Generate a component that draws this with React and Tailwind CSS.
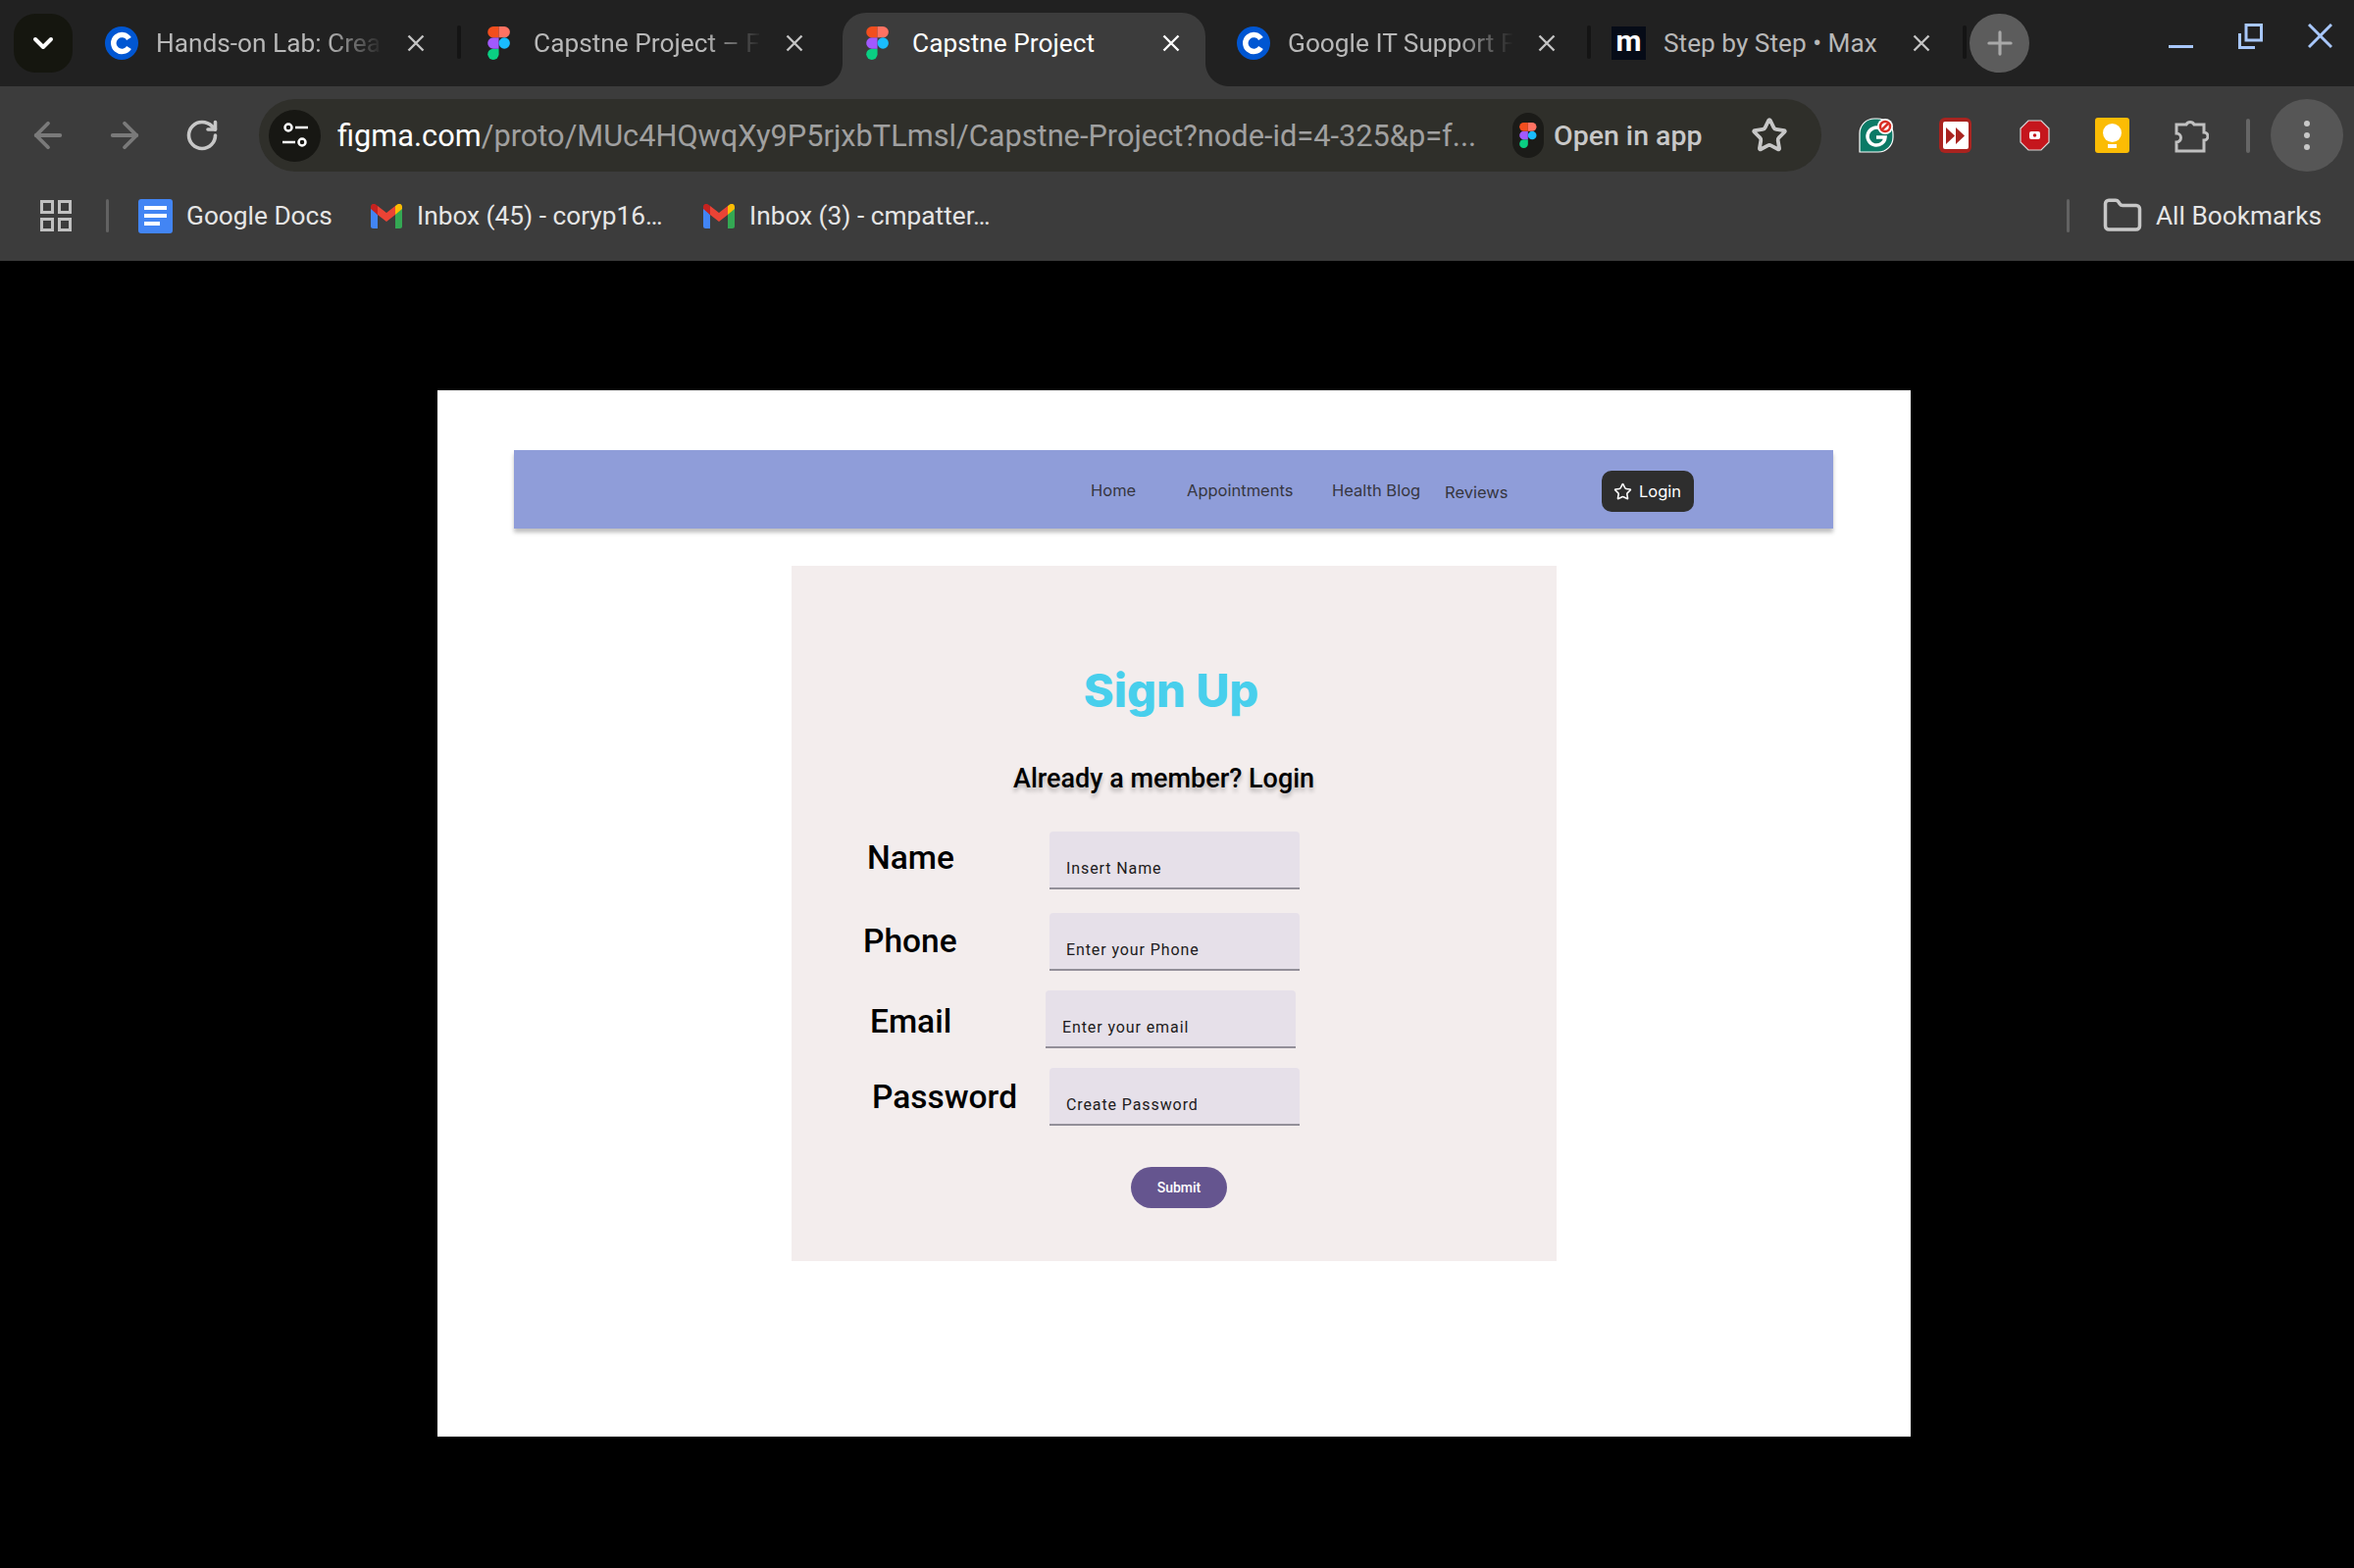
import { ArrowLeft, ArrowRight, RotateCw, Star, Plus, Folder, ChevronDown } from 'lucide-react'

const fade = '[mask-image:linear-gradient(to_right,black_75%,transparent)]'

function CloseIcon({ className = '' }) {
  return (
    <svg width="18" height="18" viewBox="0 0 18 18" className={`shrink-0 ${className}`} fill="none" stroke="currentColor" strokeWidth="2.4">
      <path d="M1.5 1.5 16.5 16.5M16.5 1.5 1.5 16.5" />
    </svg>
  )
}

function CourseraIcon() {
  return (
    <svg width="34" height="34" viewBox="0 0 34 34" className="shrink-0">
      <circle cx="17" cy="17" r="17" fill="#0056d2" />
      <path d="M24.500 12.500a8.500 8.500 0 1 0 0 9" fill="none" stroke="#fff" strokeWidth="5.500" />
    </svg>
  )
}

function FigmaIcon({ size = 34 }) {
  return (
    <svg width={size * 0.68} height={size} viewBox="0 0 24 36" className="shrink-0">
      <path d="M6 36a6 6 0 0 0 6-6v-6H6a6 6 0 0 0 0 12z" fill="#0acf83" />
      <path d="M0 18a6 6 0 0 1 6-6h6v12H6a6 6 0 0 1-6-6z" fill="#a259ff" />
      <path d="M0 6a6 6 0 0 1 6-6h6v12H6a6 6 0 0 1-6-6z" fill="#f24e1e" />
      <path d="M12 0h6a6 6 0 0 1 0 12h-6z" fill="#ff7262" />
      <circle cx="18" cy="18" r="6" fill="#1abcfe" />
    </svg>
  )
}

function GmailIcon() {
  return (
    <svg width="32" height="25" viewBox="0 0 32 25" className="shrink-0">
      <path d="M0 3v19.500A2.500 2.500 0 0 0 2.500 25H7V11z" fill="#4285f4" />
      <path d="M25 11v14h4.500a2.500 2.500 0 0 0 2.500-2.500V3z" fill="#34a853" />
      <path d="M25 2v9l7-6V3c0-3-3-4-5-2.500z" fill="#fbbc04" />
      <path d="M7 11V2l9 7 9-7v9l-9 7z" fill="#ea4335" />
      <path d="M0 3v2l7 6V2L5 .5C3-1 0 0 0 3z" fill="#c5221f" />
    </svg>
  )
}

function DocsIcon() {
  return (
    <div className="w-[35px] h-[35px] rounded-[3px] bg-[#4285f4] flex flex-col justify-center gap-[4px] px-[6px] shrink-0">
      <div className="h-[4px] bg-white" />
      <div className="h-[4px] bg-white" />
      <div className="h-[4px] w-[16px] bg-white" />
    </div>
  )
}

function Tab({ className, titleClass, closeClass, icon, title, active }) {
  return (
    <div className={`relative flex items-center h-full shrink-0 ${className}`}>
      {icon}
      <span className={`text-[26.250px] leading-[34px] whitespace-nowrap ${active ? 'text-white' : 'text-[#b8b8b8]'} ${titleClass}`}>{title}</span>
      <CloseIcon className={`${active ? 'text-white' : 'text-[#c4c4c4]'} ${closeClass}`} />
    </div>
  )
}

function TabStrip() {
  return (
    <div className="relative h-[88px] bg-[#212121] flex items-end pl-[14px] shrink-0">
      <div className="self-start mt-[14px] w-[60px] h-[60px] rounded-[22px] bg-[#15160f] flex items-center justify-center shrink-0">
        <ChevronDown size={32} strokeWidth={3} color="#fff" />
      </div>
      <div className="flex h-[75px] ml-[18px] pb-[13px]">
        <Tab className="w-[374px] pl-[15px]" icon={<CourseraIcon />} title="Hands-on Lab: Crea" titleClass={`ml-[18px] w-[232px] ${fade}`} closeClass="ml-[24px]" />
        <div className="w-[4px] h-[34px] mt-[13px] rounded-full bg-[#141414]" />
        <Tab className="w-[389px] pl-[27px]" icon={<FigmaIcon />} title="Capstne Project – F" titleClass={`ml-[24px] w-[233px] ${fade}`} closeClass="ml-[24px]" />
        <div className="relative w-[370px] h-[75px] -mb-[13px] bg-[#3c3c3c] rounded-t-[24px] pl-[24px] shrink-0">
          <div className="absolute left-[-24px] bottom-0 w-[24px] h-[24px] bg-[radial-gradient(circle_at_0_0,#212121_23.500px,#3c3c3c_24.500px)]" />
          <div className="absolute right-[-24px] bottom-0 w-[24px] h-[24px] bg-[radial-gradient(circle_at_100%_0,#212121_23.500px,#3c3c3c_24.500px)]" />
          <div className="h-[62px]">
            <Tab active icon={<FigmaIcon />} title="Capstne Project" titleClass="ml-[24px] w-[231px]" closeClass="ml-[24px]" />
          </div>
        </div>
        <Tab className="w-[389px] pl-[32px]" icon={<CourseraIcon />} title="Google IT Support F" titleClass={`ml-[18px] w-[230px] ${fade}`} closeClass="ml-[25px]" />
        <div className="w-[4px] h-[34px] mt-[13px] rounded-full bg-[#141414]" />
        <Tab
          className="w-[379px] pl-[21px]"
          icon={
            <div className="w-[35px] h-[34px] bg-[#060b17] flex items-center justify-center shrink-0">
              <span className="text-white text-[30px] leading-none font-bold font-['Roboto',sans-serif] -mt-[4px]">m</span>
            </div>
          }
          title="Step by Step • Max"
          titleClass="ml-[18px] w-[227px]"
          closeClass="ml-[27px]"
        />
        <div className="w-[4px] h-[34px] mt-[13px] rounded-full bg-[#141414]" />
      </div>
      <div className="self-start mt-[14px] ml-[3px] w-[61px] h-[60px] rounded-full bg-[#5c5c5c] flex items-center justify-center shrink-0">
        <Plus size={38} strokeWidth={2} color="#a9a9a9" />
      </div>
      {/* window buttons */}
      <div className="self-start flex ml-[142px] mt-[24px] gap-[46px] text-[#a8c7fa] shrink-0">
        <svg width="25" height="26" viewBox="0 0 25 26" fill="none" stroke="currentColor" strokeWidth="3">
          <path d="M0 23.500H25" />
        </svg>
        <svg width="25" height="26" viewBox="0 0 25 26" fill="none" stroke="currentColor" strokeWidth="3">
          <path d="M1.500 10V24.500H17M8 1.500H23.500V17H8z" />
        </svg>
        <svg width="25" height="26" viewBox="0 0 25 26" fill="none" stroke="currentColor" strokeWidth="3">
          <path d="M1 1 24 24M24 1 1 24" />
        </svg>
      </div>
    </div>
  )
}

function Toolbar() {
  return (
    <div className="h-[100px] flex items-center shrink-0 bg-[#3c3c3c] pl-[28px]">
      <ArrowLeft size={42} strokeWidth={2.2} color="#7a7a7a" className="shrink-0" />
      <ArrowRight size={42} strokeWidth={2.2} color="#7a7a7a" className="ml-[36px] shrink-0" />
      <RotateCw size={36} strokeWidth={2.4} color="#c7c7c7" className="ml-[40px] shrink-0" />
      {/* address bar */}
      <div className="ml-[40px] w-[1593px] h-[74px] rounded-full bg-[#2f2f2a] flex items-center pl-[10px] shrink-0">
        <div className="w-[53px] h-[53px] rounded-full bg-[#171713] flex items-center justify-center shrink-0">
          <svg width="30" height="30" viewBox="0 0 30 30" fill="none" stroke="#fff" strokeWidth="2.500">
            <circle cx="8" cy="7" r="3.500" />
            <path d="M15 7H28M2 22H15" />
            <circle cx="22" cy="22" r="3.500" />
          </svg>
        </div>
        <div className="ml-[17px] w-[1198px] mt-[2px] text-[30.750px] leading-[40px] whitespace-nowrap">
          <span className="text-white">figma.com</span>
          <span className="text-[#a0a0a0]">/proto/MUc4HQwqXy9P5rjxbTLmsl/Capstne-Project?node-id=4-325&amp;p=f...</span>
        </div>
        <div className="w-[32px] h-[46px] rounded-full bg-[#1b1b18] flex items-center justify-center shrink-0">
          <FigmaIcon size={26} />
        </div>
        <span className="ml-[10px] mt-[2px] text-[28.500px] leading-[40px] font-medium text-[#c8c8c8] whitespace-nowrap">Open in app</span>
        <Star size={38} strokeWidth={2.4} color="#c7c7c7" className="ml-[50px] shrink-0" />
      </div>
      {/* extensions */}
      <svg width="36" height="36" viewBox="0 0 36 36" className="ml-[38px] shrink-0">
        <path d="M1 35V16A15 15 0 0 1 16 1H19A16 16 0 0 1 35 17V20A15 15 0 0 1 20 35z" fill="#0b7a66" stroke="#fff" strokeWidth="1.200" />
        <path d="M22 11a9 9 0 1 0 5 9H18" fill="none" stroke="#fff" strokeWidth="3.500" />
        <circle cx="27" cy="9" r="8" fill="#fff" />
        <circle cx="27" cy="9" r="5" fill="none" stroke="#d93025" strokeWidth="2.500" />
        <path d="M23.500 12.500 30.500 5.500" stroke="#d93025" strokeWidth="2.500" />
      </svg>
      <div className="ml-[46px] w-[33px] h-[36px] rounded-[6px] bg-[#a9231f] flex items-center justify-center shrink-0">
        <div className="w-[26px] h-[28px] rounded-[2px] bg-white flex items-center justify-center">
          <svg width="19" height="17" viewBox="0 0 19 17" fill="#a9231f">
            <path d="M0 0 9 8.500 0 17zM10 0 19 8.500 10 17z" />
          </svg>
        </div>
      </div>
      <svg width="31" height="32" viewBox="0 0 31 32" className="ml-[49px] shrink-0">
        <path d="M9 1H22L30 9V23L22 31H9L1 23V9z" fill="#c5161d" stroke="#d8d8d8" strokeWidth="1.200" />
        <rect x="10" y="12" width="11" height="8" rx="2" fill="#fff" />
        <circle cx="15.500" cy="16" r="1.800" fill="#c5161d" />
      </svg>
      <div className="ml-[46px] w-[35px] h-[36px] rounded-[3px] bg-[#fbbc04] flex flex-col items-center justify-center shrink-0">
        <div className="w-[19px] h-[19px] rounded-full bg-white" />
        <div className="w-[9px] h-[4px] bg-white mt-[2px]" />
      </div>
      <svg width="36" height="38" viewBox="0 0 36 38" fill="none" stroke="#c0c0c0" strokeWidth="3" className="ml-[45px] mb-[3px] shrink-0">
        <path d="M3 9H13a4.500 4.500 0 0 1 8 0H31V17a4 4 0 0 1 0 8V36H3V27a4.500 4.500 0 0 0 0-9z" />
      </svg>
      <div className="ml-[38px] w-[4px] h-[35px] rounded-full bg-[#666666] shrink-0" />
      <div className="ml-[21px] w-[74px] h-[74px] rounded-full bg-[#565656] flex flex-col items-center justify-center gap-[6px] shrink-0">
        <div className="w-[6px] h-[6px] rounded-full bg-[#c7c7c7]" />
        <div className="w-[6px] h-[6px] rounded-full bg-[#c7c7c7]" />
        <div className="w-[6px] h-[6px] rounded-full bg-[#c7c7c7]" />
      </div>
    </div>
  )
}

function BookmarkBar() {
  return (
    <div className="h-[78px] flex items-center shrink-0 bg-[#3c3c3c] pl-[41px] pb-[14px] text-[26.250px] leading-[34px] text-[#e6e6e6]">
      <div className="grid grid-cols-2 gap-[4px] shrink-0">
        <div className="w-[14px] h-[14px] border-[3px] border-[#c0c0c0]" />
        <div className="w-[14px] h-[14px] border-[3px] border-[#c0c0c0]" />
        <div className="w-[14px] h-[14px] border-[3px] border-[#c0c0c0]" />
        <div className="w-[14px] h-[14px] border-[3px] border-[#c0c0c0]" />
      </div>
      <div className="ml-[35px] w-[3px] h-[34px] rounded-full bg-[#626262] shrink-0" />
      <div className="ml-[30px]"><DocsIcon /></div>
      <span className="ml-[14px] w-[188px] whitespace-nowrap">Google Docs</span>
      <GmailIcon />
      <span className="ml-[15px] w-[292px] whitespace-nowrap">Inbox (45) - coryp16…</span>
      <GmailIcon />
      <span className="ml-[15px] w-[1343px] whitespace-nowrap">Inbox (3) - cmpatter…</span>
      <div className="w-[3px] h-[34px] rounded-full bg-[#626262] shrink-0" />
      <Folder size={42} strokeWidth={2} color="#c7c7c7" className="ml-[33px] shrink-0" />
      <span className="ml-[13px] whitespace-nowrap">All Bookmarks</span>
    </div>
  )
}

function NavBar() {
  return (
    <div className="ml-[78px] mr-[79px] mt-[61px] h-[80px] bg-[#8f9dd9] shadow-[0_4px_4px_rgba(0,0,0,0.25)] flex items-center pl-[588px] text-[16.500px] leading-[24px] text-[#36363f] font-['Inter',sans-serif]">
      <span className="w-[98px] mt-[1px]">Home</span>
      <span className="w-[148px] mt-[1px]">Appointments</span>
      <span className="w-[115px] mt-[1px]">Health Blog</span>
      <span className="w-[160px] mt-[5px]">Reviews</span>
      <div className="w-[94px] h-[42px] rounded-[10px] bg-[#2e2e2e] flex items-center pl-[12px] mt-[4px] text-white">
        <Star size={19} strokeWidth={2} />
        <span className="ml-[7px]">Login</span>
      </div>
    </div>
  )
}

function Row({ label, placeholder, rowClass, labelClass }) {
  return (
    <div className={`flex items-start ${rowClass}`}>
      <span className={`text-[33.500px] leading-[40px] font-medium text-black whitespace-nowrap ${labelClass}`}>{label}</span>
      <div className="h-[59px] w-[255px] rounded-t-[4px] bg-[#e6e0e9] border-b-2 border-[#938f99] pl-[17px] pt-[27px] text-[16px] leading-[22px] tracking-[0.9px] text-[#1d1b20]">
        {placeholder}
      </div>
    </div>
  )
}

function SignUpCard() {
  return (
    <div className="ml-[361px] mt-[38px] w-[780px] h-[709px] bg-[#f3eded] font-['Roboto',sans-serif] pt-[98px]">
      <h1 className="pr-[6px] text-center text-[47px] leading-[58px] font-extrabold text-[#48cfec] font-['Inter',sans-serif]">Sign Up</h1>
      <p className="mt-[44px] ml-[226px] text-[27px] leading-[34px] font-medium text-black whitespace-nowrap [text-shadow:0_4px_4px_rgba(0,0,0,0.25)]">Already a member? Login</p>
      <Row label="Name" placeholder="Insert Name" rowClass="mt-[37px] pl-[77px]" labelClass="w-[186px] mt-[7px]" />
      <Row label="Phone" placeholder="Enter your Phone" rowClass="mt-[24px] pl-[73px]" labelClass="w-[190px] mt-[9px]" />
      <Row label="Email" placeholder="Enter your email" rowClass="mt-[20px] pl-[80px]" labelClass="w-[179px] mt-[12px]" />
      <Row label="Password" placeholder="Create Password" rowClass="mt-[20px] pl-[82px]" labelClass="w-[181px] mt-[10px]" />
      <div className="mt-[42px] ml-[346px] w-[98px] h-[42px] rounded-full bg-[#65558f] flex items-center justify-center text-[14px] font-medium text-white">
        Submit
      </div>
    </div>
  )
}

export default function App() {
  return (
    <div className="w-[2400px] h-[1599px] flex flex-col bg-black overflow-hidden font-['Roboto',sans-serif]">
      <TabStrip />
      <Toolbar />
      <BookmarkBar />
      <div className="flex-1 pt-[132px] pl-[446px]">
        <div className="w-[1502px] h-[1067px] bg-white flex flex-col">
          <NavBar />
          <SignUpCard />
        </div>
      </div>
    </div>
  )
}
